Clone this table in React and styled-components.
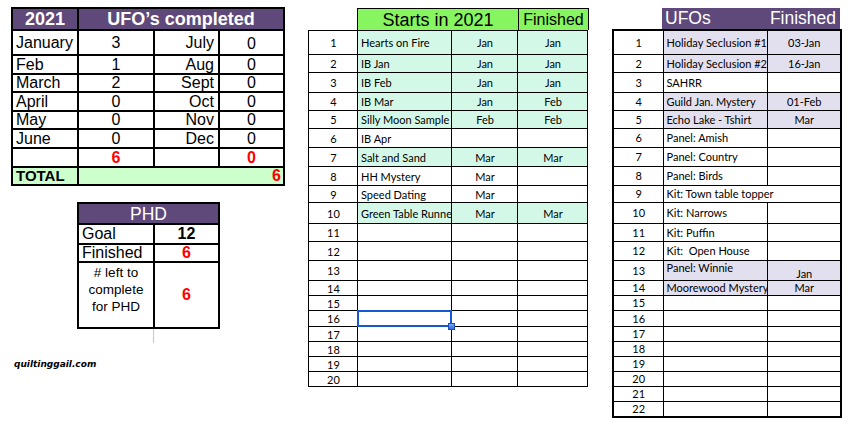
import React from 'react'
import styled, { createGlobalStyle } from 'styled-components'

const PURPLE = '#5f497a'
const MINT = '#d4f8e8'
const LAVENDER = '#e2dfee'
const LIME = '#86f55f'
const PALE_GREEN = '#ccffcc'
const RED = '#ff0000'

const GlobalStyle = createGlobalStyle`
    body {
        margin: 0;
        background: #ffffff;
        color: #000000;
        font-family: "Liberation Sans", Arial, sans-serif;
    }
`

const Sheet = styled.div`
    display: flex;
    align-items: flex-start;
    gap: 25px;
    width: 855px;
    height: 430px;
    padding: 7px 0 0 11px;
    box-sizing: border-box;
    overflow: hidden;
`

const Column = styled.div`
    display: flex;
    flex-direction: column;
    align-items: flex-start;
    flex: 0 0 ${p => p.$width}px;
    width: ${p => p.$width}px;
    margin-top: ${p => p.$top || 0}px;
`

const Grid = styled.table`
    border-collapse: collapse;
    table-layout: fixed;
    width: ${p => p.$width}px;
    border: ${p => p.$outer}px solid #000;
    margin-top: ${p => p.$top || 0}px;
    margin-left: ${p => p.$left || 0}px;
`

const Row = styled.tr`
    height: ${p => p.$h}px;
`

/* ---- summary tables (Arial look) ---- */

const Cell = styled.td`
    border: 2px solid #000;
    padding: 0 3px;
    font-size: 16px;
    line-height: 14px;
    text-align: left;
    vertical-align: middle;
    white-space: nowrap;
    overflow: hidden;
`

const HeadCell = styled(Cell)`
    background: ${PURPLE};
    color: #ffffff;
    font-size: ${p => p.$size || 18}px;
    font-weight: ${p => p.$bold ? 700 : 400};
    text-align: center;
    padding: 0;
    overflow: visible;
`

const MonthCell = styled(Cell)`
    text-align: ${p => p.$right ? 'right' : 'left'};
    padding-right: ${p => p.$right ? 4 : 3}px;
`

const CountCell = styled(Cell)`
    text-align: ${p => p.$align || 'center'};
    vertical-align: ${p => p.$low ? 'bottom' : 'middle'};
    padding-bottom: ${p => p.$low ? 3 : 0}px;
    color: ${p => p.$red ? RED : '#000'};
    font-weight: ${p => p.$bold ? 700 : 400};
    background: ${p => p.$bg || 'transparent'};
    padding-right: ${p => p.$align === 'right' ? 2 : 3}px;
`

const TotalLabel = styled(Cell)`
    background: ${PALE_GREEN};
    font-size: 15px;
    font-weight: 700;
`

const NoteCell = styled(Cell)`
    font-size: 13.5px;
    line-height: 17px;
    text-align: center;
    vertical-align: top;
    white-space: normal;
    padding: 1px 2px 0;
`

const Tick = styled.div`
    width: 0;
    height: 14px;
    margin-left: 142px;
    border-left: 1px solid #c8c8c8;
`

const Site = styled.div`
    margin: 16px 0 0 3px;
    font-family: "DejaVu Sans", Verdana, sans-serif;
    font-size: 9px;
    font-weight: 700;
    font-style: italic;
`

/* ---- spreadsheet lists (Calibri look) ---- */

const BandHeader = styled.div`
    display: grid;
    grid-template-columns: ${p => p.$cols};
    margin-left: ${p => p.$left}px;
    height: ${p => p.$h}px;
    box-sizing: border-box;
    background: ${p => p.$bg};
    color: ${p => p.$color};
    border: ${p => p.$bordered ? '1px solid #000' : 'none'};
    border-bottom: none;
`

const BandTitle = styled.div`
    display: flex;
    align-items: center;
    justify-content: ${p => p.$start ? 'flex-start' : 'center'};
    padding-left: ${p => p.$start ? 3 : 0}px;
    font-size: ${p => p.$size}px;
    line-height: 1;
    border-left: ${p => p.$divider ? '1px solid #000' : 'none'};
`

const ListCell = styled.td`
    position: relative;
    border: 1px solid #000;
    padding: 0 2px 0 3px;
    font-family: Lato, "Open Sans", sans-serif;
    font-size: 11px;
    line-height: 13px;
    background: ${p => p.$fill || '#ffffff'};
    text-align: ${p => p.$align || 'left'};
    vertical-align: ${p => p.$valign || 'middle'};
    white-space: pre;
    overflow: ${p => p.$spill ? 'visible' : 'hidden'};
    text-overflow: clip;
`

const Selection = styled.div`
    position: absolute;
    z-index: 2;
    top: -1px;
    left: -1px;
    right: -1px;
    bottom: -1px;
    border: 2px solid #1558d6;
`

const Handle = styled.div`
    position: absolute;
    right: -5px;
    bottom: -5px;
    width: 5px;
    height: 5px;
    background: linear-gradient(#7aaaf0, #2d6bd8);
    border: 1px solid #1a4fb8;
`

const ufoMonths = [
    ['January', 3, 'July', 0],
    ['Feb', 1, 'Aug', 0],
    ['March', 2, 'Sept', 0],
    ['April', 0, 'Oct', 0],
    ['May', 0, 'Nov', 0],
    ['June', 0, 'Dec', 0],
]
const monthHeights = [25, 19, 18, 19, 18, 19]

const rowHeights = [24, 18, 20, 18, 18, 19, 19, 19, 17, 21, 18, 19, 20, 15, 15, 16, 15, 15, 15, 15, 15, 16]

const starts = [
    ['Hearts on Fire', 'Jan', 'Jan', true],
    ['IB Jan', 'Jan', 'Jan', true],
    ['IB Feb', 'Jan', 'Jan', true],
    ['IB Mar', 'Jan', 'Feb', true],
    ['Silly Moon Sample', 'Feb', 'Feb', true],
    ['IB Apr', '', '', false],
    ['Salt and Sand', 'Mar', 'Mar', true],
    ['HH Mystery', 'Mar', '', false],
    ['Speed Dating', 'Mar', '', false],
    ['Green Table Runner', 'Mar', 'Mar', true],
]

const ufos = [
    ['Holiday Seclusion #1', '03-Jan', true],
    ['Holiday Seclusion #2', '16-Jan', true],
    ['SAHRR', '', false],
    ['Guild Jan. Mystery', '01-Feb', true],
    ['Echo Lake - Tshirt', 'Mar', true],
    ['Panel: Amish', '', false],
    ['Panel: Country', '', false],
    ['Panel: Birds', '', false],
    ['Kit: Town table topper', null, false],
    ['Kit: Narrows', '', false],
    ['Kit: Puffin', '', false],
    ['Kit:  Open House', '', false],
    ['Panel: Winnie', 'Jan', true, 'split'],
    ['Moorewood Mystery', 'Mar', true],
]

const UfoSummary = () => (
    <Grid $width={272} $outer={2}>
        <colgroup>
            <col style={{ width: 66 }} />
            <col style={{ width: 76 }} />
            <col style={{ width: 65 }} />
            <col style={{ width: 65 }} />
        </colgroup>
        <tbody>
            <Row $h={22}>
                <HeadCell $bold>2021</HeadCell>
                <HeadCell $bold colSpan={3}>UFO’s completed</HeadCell>
            </Row>
            {ufoMonths.map(([m1, c1, m2, c2], i) => (
                <Row key={m1} $h={monthHeights[i]}>
                    <MonthCell>{m1}</MonthCell>
                    <CountCell>{c1}</CountCell>
                    <MonthCell $right>{m2}</MonthCell>
                    <CountCell $low={i === 0}>{c2}</CountCell>
                </Row>
            ))}
            <Row $h={19}>
                <CountCell />
                <CountCell $red $bold>6</CountCell>
                <CountCell />
                <CountCell $red $bold>0</CountCell>
            </Row>
            <Row $h={18}>
                <TotalLabel>TOTAL</TotalLabel>
                <CountCell colSpan={3} $align="right" $red $bold $bg={PALE_GREEN}>6</CountCell>
            </Row>
        </tbody>
    </Grid>
)

const PhdBox = () => (
    <Grid $width={141} $outer={2} $top={16} $left={66}>
        <colgroup>
            <col style={{ width: 76 }} />
            <col style={{ width: 65 }} />
        </colgroup>
        <tbody>
            <Row $h={21}>
                <HeadCell colSpan={2} $size={17.5}>PHD</HeadCell>
            </Row>
            <Row $h={20}>
                <MonthCell>Goal</MonthCell>
                <CountCell $bold>12</CountCell>
            </Row>
            <Row $h={18}>
                <MonthCell>Finished</MonthCell>
                <CountCell $red $bold>6</CountCell>
            </Row>
            <Row $h={66}>
                <NoteCell># left to complete for PHD</NoteCell>
                <CountCell $red $bold>6</CountCell>
            </Row>
        </tbody>
    </Grid>
)

const StartsList = () => (
    <Column $top={1} $width={279}>
        <BandHeader $cols="160px 70px" $left={49} $h={22} $bg={LIME} $color="#000" $bordered>
            <BandTitle $size={18}>Starts in 2021</BandTitle>
            <BandTitle $size={16} $divider>Finished</BandTitle>
        </BandHeader>
        <Grid $width={279} $outer={1}>
            <colgroup>
                <col style={{ width: 49 }} />
                <col style={{ width: 94 }} />
                <col style={{ width: 66 }} />
                <col style={{ width: 70 }} />
            </colgroup>
            <tbody>
                {rowHeights.slice(0, 20).map((h, i) => {
                    const item = starts[i] || ['', '', '', false]
                    const fill = item[3] ? MINT : null
                    const selected = i === 15
                    return (
                        <Row key={i} $h={h}>
                            <ListCell $align="center">{i + 1}</ListCell>
                            <ListCell $fill={fill} $spill={selected}>
                                {item[0]}
                                {selected && <Selection><Handle /></Selection>}
                            </ListCell>
                            <ListCell $fill={fill} $align="center">{item[1]}</ListCell>
                            <ListCell $fill={fill} $align="center">{item[2]}</ListCell>
                        </Row>
                    )
                })}
            </tbody>
        </Grid>
    </Column>
)

const UfoList = () => (
    <Column $top={1} $width={228}>
        <BandHeader $cols="104px 74px" $left={50} $h={21} $bg={PURPLE} $color="#fff">
            <BandTitle $size={17.5} $start>UFOs</BandTitle>
            <BandTitle $size={17.5}>Finished</BandTitle>
        </BandHeader>
        <Grid $width={228} $outer={2}>
            <colgroup>
                <col style={{ width: 50 }} />
                <col style={{ width: 104 }} />
                <col style={{ width: 74 }} />
            </colgroup>
            <tbody>
                {rowHeights.map((h, i) => {
                    const item = ufos[i] || ['', '', false]
                    const fill = item[2] ? LAVENDER : null
                    const split = item[3] === 'split'
                    return (
                        <Row key={i} $h={h}>
                            <ListCell $align="center">{i + 1}</ListCell>
                            {item[1] === null ? (
                                <ListCell colSpan={2} $fill={fill}>{item[0]}</ListCell>
                            ) : (
                                <>
                                    <ListCell $fill={fill} $valign={split ? 'top' : 'middle'}>{item[0]}</ListCell>
                                    <ListCell $fill={fill} $align="center" $valign={split ? 'bottom' : 'middle'}>{item[1]}</ListCell>
                                </>
                            )}
                        </Row>
                    )
                })}
            </tbody>
        </Grid>
    </Column>
)

export default function App() {
    return (
        <>
            <GlobalStyle />
            <Sheet>
                <Column $width={272}>
                    <UfoSummary />
                    <PhdBox />
                    <Tick />
                    <Site>quiltinggail.com</Site>
                </Column>
                <StartsList />
                <UfoList />
            </Sheet>
        </>
    )
}
